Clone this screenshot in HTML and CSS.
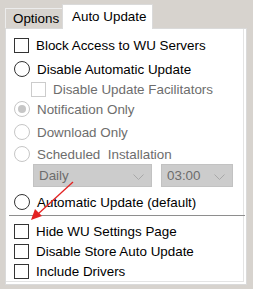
FILE: index.html
```html
<!DOCTYPE html>
<html>
<head>
<meta charset="utf-8">
<link rel="stylesheet" href="styles.css">
</head>
<body>
<div class="window">
  <div class="tabs">
    <div class="tab">Options</div>
    <div class="tab active">Auto Update</div>
  </div>
  <div class="panel">
    <div class="row r-block"><span class="box"></span><span class="label">Block Access to WU Servers</span></div>
    <div class="row r-disable"><span class="radio"></span><span class="label">Disable Automatic Update</span></div>
    <div class="row r-fac sub disabled"><span class="box"></span><span class="label">Disable Update Facilitators</span></div>
    <div class="row r-notif disabled"><span class="radio checked"></span><span class="label">Notification Only</span></div>
    <div class="row r-down disabled"><span class="radio"></span><span class="label">Download Only</span></div>
    <div class="row r-sched disabled"><span class="radio"></span><span class="label">Scheduled&nbsp; Installation</span></div>
    <div class="selects">
      <div class="select s-day"><span>Daily</span><svg class="chev" width="11" height="6" viewBox="0 0 11 6"><path d="M0.5 0.5 L5.5 5.5 L10.5 0.5" fill="none" stroke="#a8a8a8" stroke-width="1"/></svg></div>
      <div class="select s-time"><span>03:00</span><svg class="chev" width="11" height="6" viewBox="0 0 11 6"><path d="M0.5 0.5 L5.5 5.5 L10.5 0.5" fill="none" stroke="#a8a8a8" stroke-width="1"/></svg></div>
    </div>
    <div class="row r-auto"><span class="radio"></span><span class="label">Automatic Update (default)</span></div>
    <div class="sep"></div>
    <div class="row r-hide"><span class="box"></span><span class="label">Hide WU Settings Page</span></div>
    <div class="row r-store"><span class="box"></span><span class="label">Disable Store Auto Update</span></div>
    <div class="row r-drv"><span class="box"></span><span class="label">Include Drivers</span></div>
  </div>
  <svg class="arrow" width="253" height="289" viewBox="0 0 253 289">
    <line x1="73" y1="182" x2="38" y2="214" stroke="#e32222" stroke-width="1.3"/>
    <polygon points="31,220 35,209 42,216" fill="#e32222"/>
  </svg>
</div>
</body>
</html>
```
FILE: styles.css
```css
* { box-sizing: border-box; }
html, body { margin: 0; padding: 0; }
body {
  background: #d7d3ce;
  font-family: "Liberation Sans", Arial, sans-serif;
  font-size: 13.4px;
  color: #000;
  width: 253px;
  height: 289px;
  overflow: hidden;
}
.window {
  position: relative;
  padding: 3px 0 0 5px;
}
.tabs {
  display: flex;
  align-items: flex-end;
  height: 25px;
  position: relative;
  z-index: 2;
}
.tab {
  height: 20px;
  width: 57px;
  padding-left: 7px;
  line-height: 19px;
  background: #d7d3ce;
  border-left: 1px solid #ececec;
  border-top: 1px solid #ececec;
}
.tab.active {
  height: 25px;
  width: 91px;
  padding-left: 9px;
  line-height: 23px;
  background: #fff;
  border: 1px solid #dadada;
  border-bottom: none;
  margin-bottom: -1px;
}
.panel {
  width: 242px;
  height: 257px;
  background: #fff;
  border: 1px solid #dadada;
  box-shadow: inset -2px -2px 0 #fff, inset -3px -3px 0 #e4e4e4;
  padding: 6px 0 0 8px;
  display: flex;
  flex-direction: column;
}
.row {
  display: flex;
  align-items: center;
  height: 20px;
  white-space: nowrap;
}
.label { margin-left: 7px; }
.box {
  width: 15px;
  height: 15px;
  border: 1px solid #333;
  background: #fff;
  flex: none;
}
.radio {
  width: 16px;
  height: 16px;
  border: 1px solid #333;
  border-radius: 50%;
  background: #fff;
  flex: none;
  position: relative;
}
.disabled { color: #6d6d6d; }
.disabled .box { border-color: #cccccc; }
.disabled .radio { border-color: #c6c6c6; }
.radio.checked::after {
  content: "";
  position: absolute;
  left: 3px; top: 3px;
  width: 8px; height: 8px;
  border-radius: 50%;
  background: #c6c6c6;
}
.r-disable { margin-top: 4px; }
.r-fac { padding-left: 17px; }
.r-down { margin-top: 3px; }
.r-sched { margin-top: 2px; }
.selects {
  display: flex;
  gap: 9px;
  padding-left: 19px;
}
.select {
  height: 23px;
  background: #cccccc;
  border: 1px solid #c2c2c2;
  color: #6d6d6d;
  display: flex;
  align-items: center;
  justify-content: space-between;
  padding: 0 7px 0 5px;
}
.s-day { width: 119px; }
.s-time { width: 72px; }
.chev { margin-top: 2px; }
.r-auto { margin-top: 5px; }
.sep {
  height: 1px;
  background: #8e8e8e;
  margin: 3px 0 5px -5px;
  width: 236px;
}
.arrow {
  position: absolute;
  left: 0; top: 0;
  pointer-events: none;
  z-index: 5;
}
```
